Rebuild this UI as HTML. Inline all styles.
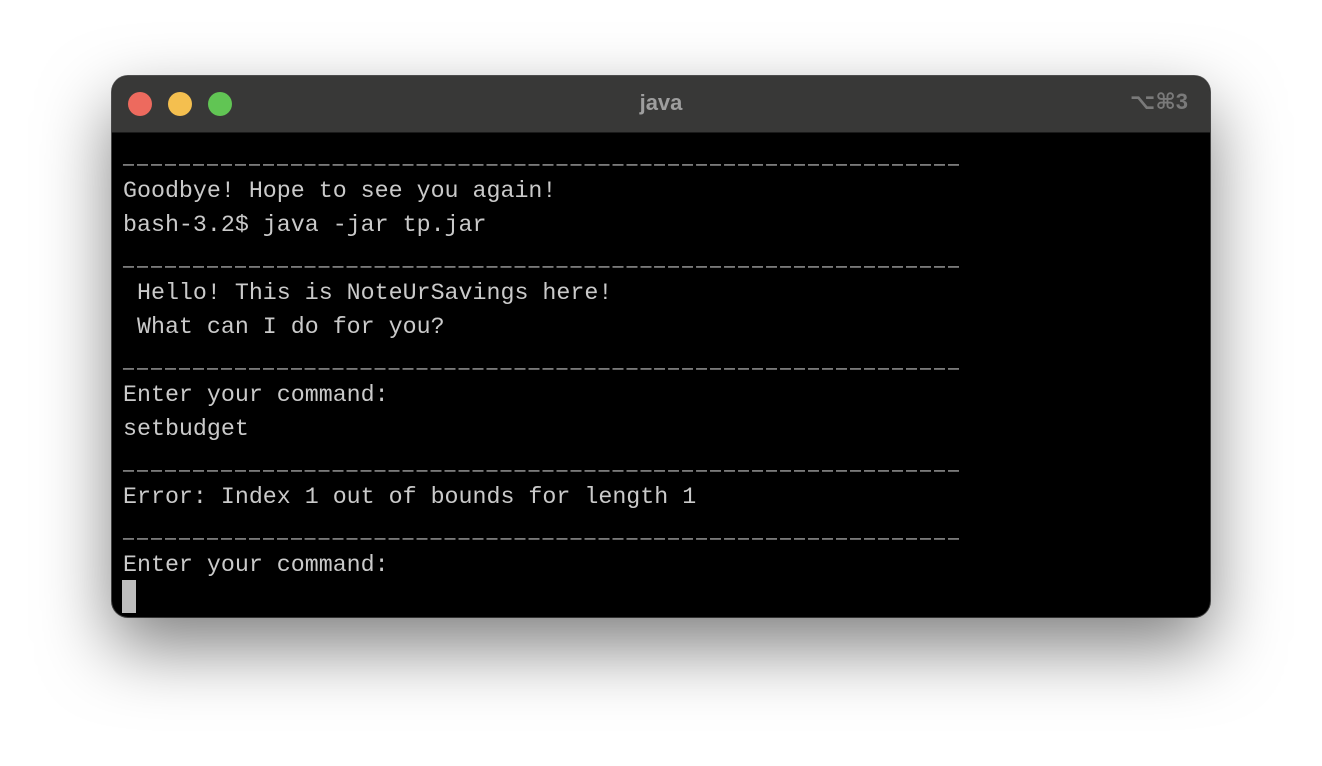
<!DOCTYPE html>
<html><head><meta charset="utf-8"><style>
html,body{margin:0;padding:0;width:1322px;height:766px;background:#fff;overflow:hidden}
.win{position:absolute;left:112px;top:76px;width:1098px;height:541px;border-radius:16px;background:#000;box-shadow:0 30px 70px rgba(0,0,0,.5),0 0 0 1px #555;overflow:hidden}
.tb{position:absolute;left:0;top:0;right:0;height:56px;background:#383837;border-bottom:1px solid #1a1a1a}
.dot{position:absolute;top:16px;width:24px;height:24px;border-radius:50%}
.title{position:absolute;left:0;right:0;top:14px;text-align:center;color:#9e9e9e;font:bold 22px "Liberation Sans",sans-serif}
.kb{position:absolute;right:22px;top:13px;color:#7a7a7a;font:bold 22px "Liberation Sans","DejaVu Sans",sans-serif}
pre{position:absolute;left:11px;top:64px;margin:0;font:23.3px/34px "Liberation Mono",monospace;color:#cacaca;white-space:pre}
.gap{position:absolute;left:11px;width:840px;height:6px;background:repeating-linear-gradient(90deg,transparent 0 11px,#000 11px 13.98px)}
.cur{position:absolute;left:10px;top:504px;width:14px;height:33px;background:#bdbdbd}
</style></head><body>
<div class="win">
<div class="tb">
<div class="dot" style="left:16px;background:#ed6a5e"></div>
<div class="dot" style="left:56px;background:#f4bf4f"></div>
<div class="dot" style="left:96px;background:#61c554"></div>
<div class="title">java</div>
<div class="kb">⌥⌘3</div>
</div>
<pre>____________________________________________________________
Goodbye! Hope to see you again!
bash-3.2$ java -jar tp.jar
____________________________________________________________
 Hello! This is NoteUrSavings here!
 What can I do for you?
____________________________________________________________
Enter your command:
setbudget
____________________________________________________________
Error: Index 1 out of bounds for length 1
____________________________________________________________
Enter your command:</pre>
<div class="gap" style="top:84px"></div>
<div class="gap" style="top:186px"></div>
<div class="gap" style="top:288px"></div>
<div class="gap" style="top:390px"></div>
<div class="gap" style="top:458px"></div>
<div class="cur"></div>
</div>
</body></html>
